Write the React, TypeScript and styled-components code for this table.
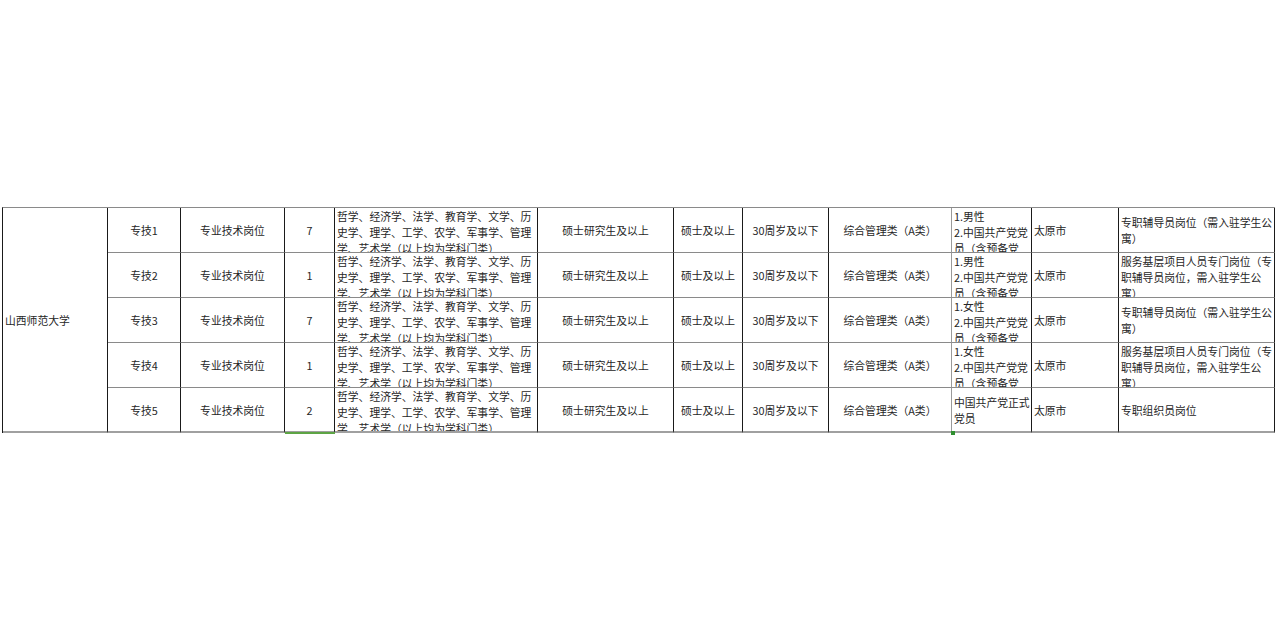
import React from "react";
import styled, { createGlobalStyle } from "styled-components";

const Global = createGlobalStyle`
  html, body { margin: 0; padding: 0; background: #ffffff; }
  body { font-family: "Noto Sans CJK SC", "Noto Sans", sans-serif; }
`;

const Page = styled.div`
  width: 1280px;
  height: 640px;
  box-sizing: border-box;
  padding: 207px 0 0 2px;
  background: #ffffff;
`;

const Grid = styled.div`
  display: grid;
  grid-template-columns: 105px 73px 104px 50px 203px 136px 69px 86px 123px 80px 87px 156px;
  grid-template-rows: repeat(5, 45px);
  width: 1272px;
  border-left: 1px solid #1a1a1a;
  border-top: 1px solid #8a8a8a;
  box-sizing: content-box;
  position: relative;
`;

type CellProps = {
  $align?: "left" | "center";
  $valign?: "top" | "center";
  $span?: number;
  $lastRow?: boolean;
  $lightRight?: boolean;
};

const Cell = styled.div<CellProps>`
  box-sizing: border-box;
  display: flex;
  flex-direction: column;
  justify-content: ${(p) => (p.$valign === "top" ? "flex-start" : "center")};
  align-items: ${(p) => (p.$align === "left" ? "flex-start" : "center")};
  text-align: ${(p) => (p.$align === "left" ? "left" : "center")};
  padding: 0 ${(p) => (p.$align === "left" ? "2px" : "2px")};
  overflow: hidden;
  border-right: 1px solid ${(p) => (p.$lightRight ? "#9a9a9a" : "#1a1a1a")};
  border-bottom: ${(p) => (p.$lastRow ? "2px solid #a0a0a0" : "1px solid #8a8a8a")};
  grid-row: ${(p) => (p.$span ? `span ${p.$span}` : "auto")};
  font-size: 10.8px;
  line-height: 16px;
  color: #262626;
  white-space: nowrap;
`;

const Line = styled.span`
  display: block;
  white-space: nowrap;
`;

const Selection = styled.div`
  position: absolute;
  left: 282px;
  top: 224px;
  width: 50px;
  height: 2px;
  background: #5da444;
`;

const Dot = styled.div`
  position: absolute;
  left: 948px;
  top: 223px;
  width: 4px;
  height: 4px;
  background: #2f8f2f;
`;

type Row = {
  code: string;
  count: string;
  cond: string[];
  condTop: boolean;
  remark: string[];
  remarkTop: boolean;
};

const major = [
  "哲学、经济学、法学、教育学、文学、历",
  "史学、理学、工学、农学、军事学、管理",
  "学、艺术学（以上均为学科门类）",
];

const rows: Row[] = [
  {
    code: "专技1",
    count: "7",
    cond: ["1.男性", "2.中国共产党党", "员（含预备党"],
    condTop: true,
    remark: ["专职辅导员岗位（需入驻学生公", "寓）"],
    remarkTop: false,
  },
  {
    code: "专技2",
    count: "1",
    cond: ["1.男性", "2.中国共产党党", "员（含预备党"],
    condTop: true,
    remark: ["服务基层项目人员专门岗位（专", "职辅导员岗位，需入驻学生公", "寓）"],
    remarkTop: true,
  },
  {
    code: "专技3",
    count: "7",
    cond: ["1.女性", "2.中国共产党党", "员（含预备党"],
    condTop: true,
    remark: ["专职辅导员岗位（需入驻学生公", "寓）"],
    remarkTop: false,
  },
  {
    code: "专技4",
    count: "1",
    cond: ["1.女性", "2.中国共产党党", "员（含预备党"],
    condTop: true,
    remark: ["服务基层项目人员专门岗位（专", "职辅导员岗位，需入驻学生公", "寓）"],
    remarkTop: true,
  },
  {
    code: "专技5",
    count: "2",
    cond: ["中国共产党正式", "党员"],
    condTop: false,
    remark: ["专职组织员岗位"],
    remarkTop: false,
  },
];

export default function App() {
  return (
    <Page>
      <Global />
      <Grid>
        <Cell $align="left" $span={5} $lastRow>
          山西师范大学
        </Cell>
        {rows.map((r, i) => {
          const last = i === rows.length - 1;
          return (
            <React.Fragment key={r.code}>
              <Cell $lastRow={last}>{r.code}</Cell>
              <Cell $lastRow={last}>专业技术岗位</Cell>
              <Cell $lastRow={last}>{r.count}</Cell>
              <Cell $align="left" $valign="top" $lastRow={last}>
                {major.map((m) => (
                  <Line key={m}>{m}</Line>
                ))}
              </Cell>
              <Cell $lastRow={last}>硕士研究生及以上</Cell>
              <Cell $lastRow={last}>硕士及以上</Cell>
              <Cell $lastRow={last}>30周岁及以下</Cell>
              <Cell $lastRow={last} $lightRight>
                综合管理类（A类）
              </Cell>
              <Cell $align="left" $valign={r.condTop ? "top" : "center"} $lastRow={last}>
                {r.cond.map((c) => (
                  <Line key={c}>{c}</Line>
                ))}
              </Cell>
              <Cell $align="left" $lastRow={last}>
                太原市
              </Cell>
              <Cell $align="left" $valign={r.remarkTop ? "top" : "center"} $lastRow={last}>
                {r.remark.map((c) => (
                  <Line key={c}>{c}</Line>
                ))}
              </Cell>
            </React.Fragment>
          );
        })}
        <Selection />
        <Dot />
      </Grid>
    </Page>
  );
}
